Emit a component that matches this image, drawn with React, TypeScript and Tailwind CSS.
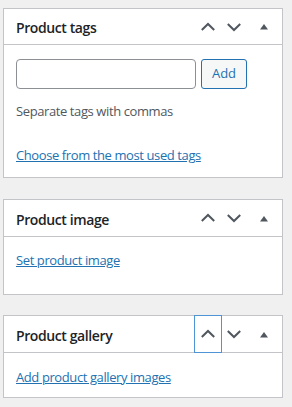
import React from "react";

const font = { fontFamily: '"Open Sans", "Noto Sans", sans-serif' };

function Up() {
  return (
    <svg width="16" height="10" viewBox="0 0 16 10" fill="none">
      <polyline points="1.8,8 8,2 14.2,8" stroke="#50575e" strokeWidth="2" />
    </svg>
  );
}
function Down() {
  return (
    <svg width="16" height="10" viewBox="0 0 16 10" fill="none">
      <polyline points="1.8,2 8,8 14.2,2" stroke="#50575e" strokeWidth="2" />
    </svg>
  );
}
function Tri() {
  return (
    <svg width="10" height="7" viewBox="0 0 10 7">
      <path d="M1 6.5 L5 1 L9 6.5 Z" fill="#50575e" />
    </svg>
  );
}

function Header({ title, focused, tall }: { title: string; focused?: boolean; tall?: boolean }) {
  return (
    <div className={"flex items-stretch border-b border-[#c3c4c7] " + (tall ? "h-[37px]" : "h-[36px]")}>
      <div className="flex flex-1 items-center pl-[12px] pt-[2px] text-[14px] font-semibold tracking-[-0.4px] text-[#1d2327]">
        {title}
      </div>
      <div
        className={
          "flex w-[26px] items-center justify-center " +
          (focused ? "outline outline-1 outline-[#4f94d4]" : "")
        }
      >
        <Up />
      </div>
      <div className="flex w-[25px] items-center justify-center">
        <Down />
      </div>
      <div className="flex w-[36px] items-center justify-center">
        <Tri />
      </div>
    </div>
  );
}

export default function App() {
  return (
    <div className="min-h-[407px] w-[292px] bg-[#f0f0f1] pl-[3px] pt-[8px] tracking-[-0.4px]" style={font}>
      <div className="flex w-[280px] flex-col">
        <div className="border border-[#c3c4c7] bg-white">
          <Header title="Product tags" />
          <div className="px-[12px] pt-[14px] pb-[12px]">
            <div className="flex gap-[5px]">
              <input
                className="h-[30px] w-[180px] rounded-[4px] border border-[#8c8f94] bg-white"
                aria-label="tags"
              />
              <button className="h-[30px] w-[46px] rounded-[3px] border border-[#2271b1] bg-[#f6f7f7] text-[13px] tracking-normal text-[#2271b1]">
                Add
              </button>
            </div>
            <p className="mt-[13px] text-[13px] leading-[19px] text-[#50575e]">
              Separate tags with commas
            </p>
            <p className="mt-[25px] text-[13px] leading-[19px]">
              <a href="#" className="text-[#2271b1] underline">
                Choose from the most used tags
              </a>
            </p>
          </div>
        </div>

        <div className="mt-[21px] border border-[#c3c4c7] bg-white">
          <Header title="Product image" tall />
          <div className="px-[12px] pt-[14px] pb-[24px]">
            <p className="text-[13px] leading-[19px]">
              <a href="#" className="text-[#2271b1] underline">
                Set product image
              </a>
            </p>
          </div>
        </div>

        <div className="mt-[20px] border border-[#c3c4c7] bg-white">
          <Header title="Product gallery" focused tall />
          <div className="px-[12px] pt-[15px] pb-[10px]">
            <p className="text-[13px] leading-[19px]">
              <a href="#" className="text-[#2271b1] underline">
                Add product gallery images
              </a>
            </p>
          </div>
        </div>
      </div>
    </div>
  );
}
